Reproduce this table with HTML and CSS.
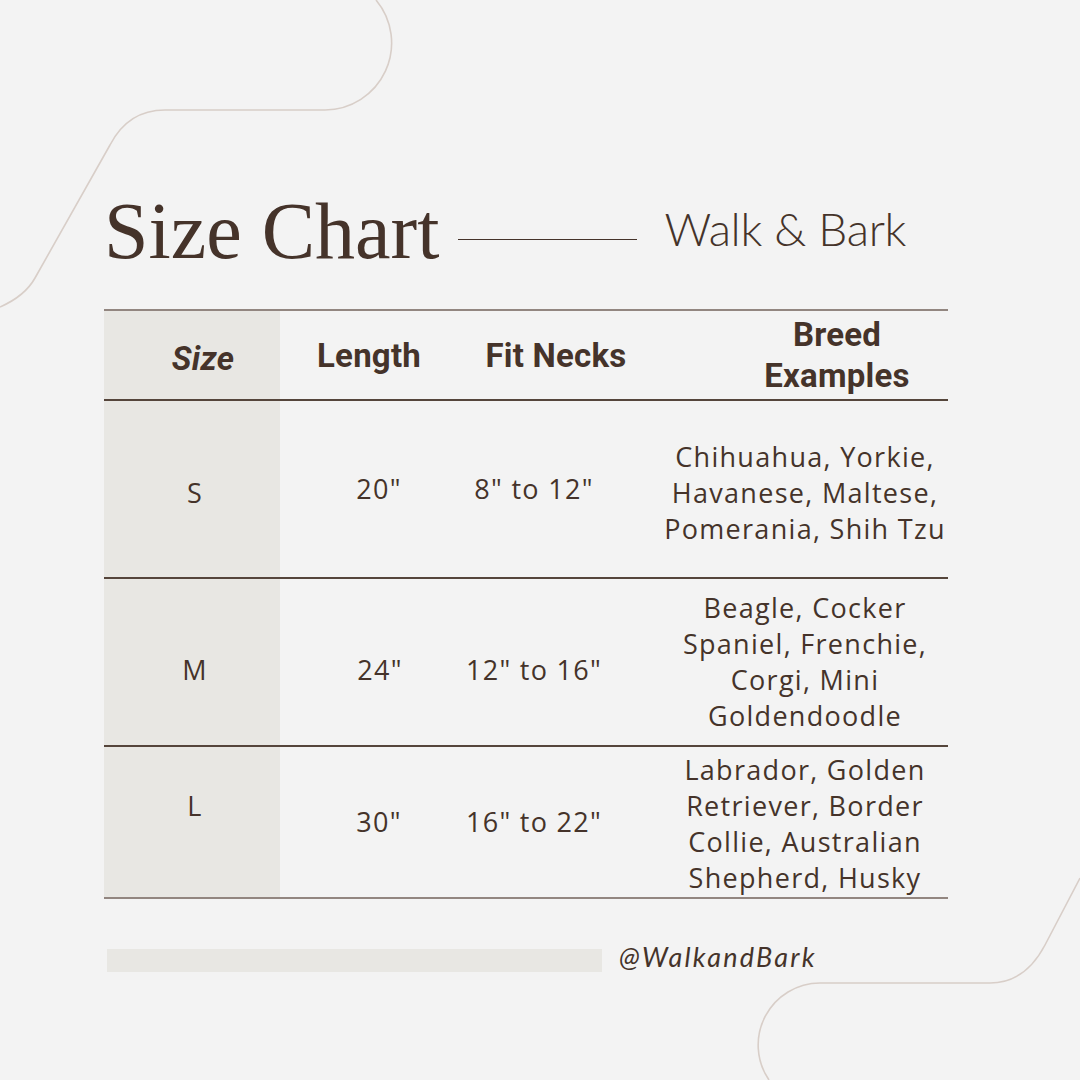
FILE: index.html
```html
<!DOCTYPE html>
<html>
<head>
<meta charset="utf-8">
<link rel="stylesheet" href="styles.css">
</head>
<body>
<div class="page">
  <svg class="deco" width="1080" height="1080" viewBox="0 0 1080 1080">
    <path d="M0,307 Q25,296 35,278 L110,145 Q128,110 165,110 L325,110 A67,67 0 0 0 376,0" />
    <path d="M1080,878 L1045,945 Q1025,983 990,983 L820,983 A62,62 0 0 0 769,1080" />
  </svg>
  <div class="content">
    <div class="top">
      <h1 class="title">Size Chart</h1>
      <div class="rule"></div>
      <div class="brand">Walk &amp; Bark</div>
    </div>
    <div class="table">
      <div class="row head">
        <div class="cell c1"><span class="hsize">Size</span></div>
        <div class="cell c2 h2">Length</div>
        <div class="cell c3">Fit Necks</div>
        <div class="cell c4 h4">Breed<br>Examples</div>
      </div>
      <div class="row rs">
        <div class="cell c1 s1">S</div>
        <div class="cell c2 d2">20"</div>
        <div class="cell c3 d3">8" to 12"</div>
        <div class="cell c4 d4 sb">Chihuahua, Yorkie,<br>Havanese, Maltese,<br>Pomerania, Shih Tzu</div>
      </div>
      <div class="row rm">
        <div class="cell c1 m1">M</div>
        <div class="cell c2 d2 m1">24"</div>
        <div class="cell c3 d3 m1">12" to 16"</div>
        <div class="cell c4 d4">Beagle, Cocker<br>Spaniel, Frenchie,<br>Corgi, Mini<br>Goldendoodle</div>
      </div>
      <div class="row rl last">
        <div class="cell c1 l1">L</div>
        <div class="cell c2 d2">30"</div>
        <div class="cell c3 d3">16" to 22"</div>
        <div class="cell c4 d4 lb">Labrador, Golden<br>Retriever, Border<br>Collie, Australian<br>Shepherd, Husky</div>
      </div>
    </div>
    <div class="footer">
      <div class="bar"></div>
      <div class="handle">@WalkandBark</div>
    </div>
  </div>
</div>
</body>
</html>
```

FILE: styles.css
```css
html, body {
  margin: 0;
  padding: 0;
  background: #f3f3f3;
}
.page {
  position: relative;
  width: 1080px;
  height: 1080px;
  overflow: hidden;
  background: #f3f3f3;
  color: #45332a;
}
.deco {
  position: absolute;
  left: 0;
  top: 0;
}
.deco path {
  fill: none;
  stroke: #d8cec8;
  stroke-width: 1.6;
}
.content {
  position: relative;
  padding: 193px 0 0 104px;
}
.top {
  display: flex;
  align-items: flex-start;
  height: 80px;
}
.title {
  margin: 0;
  font-family: "Liberation Serif", serif;
  font-weight: 400;
  font-size: 80px;
  line-height: 76px;
  letter-spacing: 0;
}
.rule {
  width: 179px;
  height: 1px;
  background: #45332a;
  margin: 46px 0 0 19px;
}
.brand {
  font-family: "Lato", sans-serif;
  font-weight: 300;
  font-size: 46px;
  line-height: 46px;
  margin: 13px 0 0 27px;
  letter-spacing: -0.3px;
}
.table {
  width: 844px;
  margin-top: 36px;
  border-top: 2px solid #928680;
}
.row {
  display: grid;
  grid-template-columns: 176px 188px 176px 304px;
  border-bottom: 2px solid #55453b;
}
.row.last {
  border-bottom-color: #928680;
}
.head { height: 88px; }
.rs { height: 176px; }
.rm { height: 166px; }
.rl { height: 150px; }
.cell {
  display: flex;
  align-items: center;
  justify-content: center;
  text-align: center;
  font-family: "Open Sans", sans-serif;
  font-size: 27px;
  line-height: 36px;
  letter-spacing: 1.3px;
  white-space: nowrap;
}
.c1 {
  background: #e8e7e3;
  padding-left: 6px;
}
.head .cell {
  font-family: "Roboto", sans-serif;
  font-weight: 700;
  font-size: 33px;
  line-height: 41px;
  letter-spacing: 0.2px;
}
.hsize {
  font-style: italic;
  padding: 6px 0 0 16px;
}
.h2 { padding-right: 10px; }
.h4 { padding: 0 0 0 82px; }
.d2 { padding-left: 10px; }
.d3 { padding-right: 44px; }
.d4 { padding-left: 18px; }
.s1 { padding-top: 8px; }
.sb { padding-top: 8px; }
.lb { padding-top: 3px; }
.m1 { padding-top: 16px; }
.rm .d2 { padding-left: 12px; }
.l1 { padding-bottom: 32px; }
.footer {
  display: flex;
  align-items: center;
  margin-top: 49px;
}
.bar {
  width: 495px;
  height: 23px;
  background: #e8e7e3;
  margin-left: 3px;
}
.handle {
  margin-left: 17px;
  margin-top: -6px;
  font-family: "Lato", sans-serif;
  font-style: italic;
  font-size: 27px;
  line-height: 30px;
  letter-spacing: 2.2px;
}
```
